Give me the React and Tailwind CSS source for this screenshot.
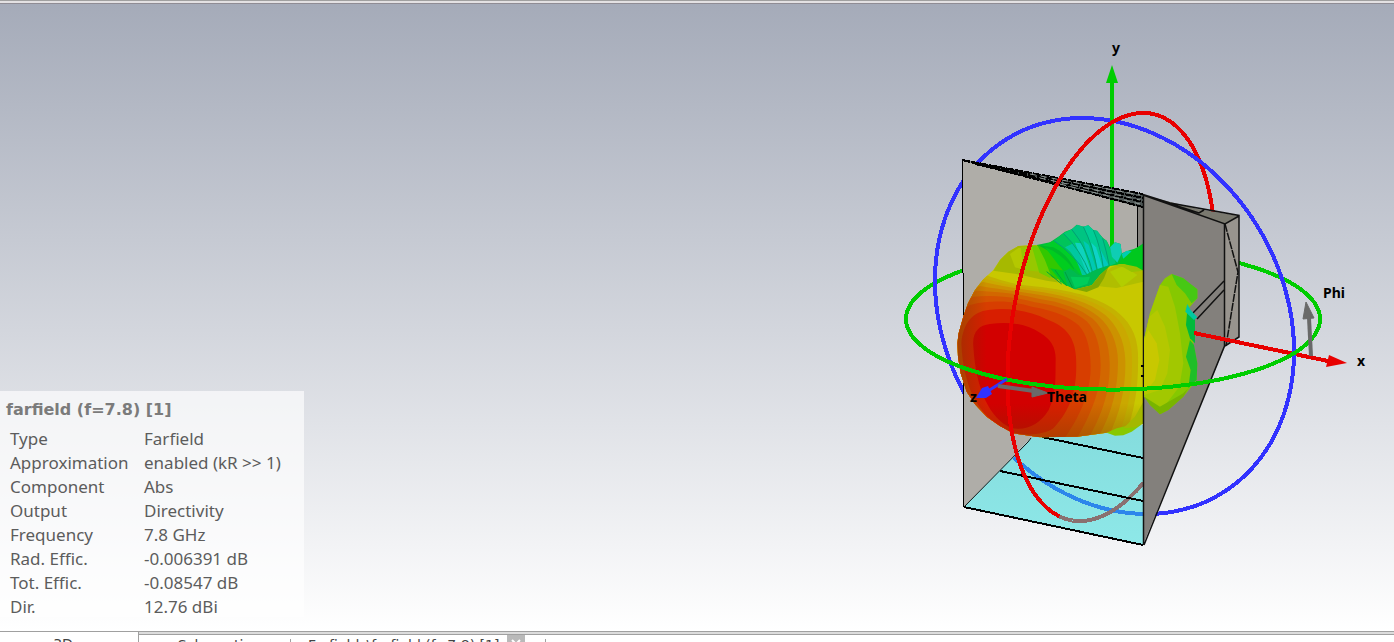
import React from "react";

const details = [
  ["Type", "Farfield"],
  ["Approximation", "enabled (kR >> 1)"],
  ["Component", "Abs"],
  ["Output", "Directivity"],
  ["Frequency", "7.8 GHz"],
  ["Rad. Effic.", "-0.006391 dB"],
  ["Tot. Effic.", "-0.08547 dB"],
  ["Dir.", "12.76 dBi"],
];

// projected circle: x = cx + a cos t, y = cy + s cos t + b sin t
const BLUE = { cx: 1114.5, cy: 316, a: 179.5, s: 35.3, b: 194.8 };
const RED = { cx: 1111.5, cy: 317, a: 104, s: -62.2, b: 194.3 };
const GREEN = { cx: 1113, cy: 319, a: 207, s: 0, b: 70.5 };

const Ring = ({ ring, from, to, color }) => {
  const points = [];
  for (let t = from; t <= to; t += 2) {
    const r = (t * Math.PI) / 180;
    const x = ring.cx + ring.a * Math.cos(r);
    const y = ring.cy + ring.s * Math.cos(r) + ring.b * Math.sin(r);
    points.push(`${x.toFixed(1)},${y.toFixed(1)}`);
  }
  return (
    <polyline
      points={points.join(" ")}
      fill="none"
      stroke={color}
      strokeWidth="4"
      shapeRendering="crispEdges"
    />
  );
};

// the lobes use a grid three times finer than the scene
const BODY =
  "M22 400 L26 370 L40 320 L54 280 L75 240 L100 208 L130 180 L150 150 L175 125 L205 108 L260 105 L300 120 L400 150 L500 162 L545 166 L580 180 V640 L540 650 L470 668 L380 680 L270 682 L190 670 L150 648 L110 620 L75 583 L50 545 L32 490 L24 440 Z";

const contours = [
  ["#c4b200", "M0 218 L110 196 C180 222 220 226 280 232 C380 246 440 262 495 300 C535 330 562 370 564 430 C566 520 558 600 520 690 L0 700 Z"],
  ["#caa800", "M0 230 L110 206 C180 228 220 232 280 239 C370 252 430 270 480 306 C518 334 544 380 546 440 C548 520 538 600 500 690 L0 700 Z"],
  ["#cc9200", "M0 242 L100 216 C170 232 220 238 280 247 C355 260 415 276 465 314 C500 344 524 390 526 450 C528 530 512 610 470 690 L0 700 Z"],
  ["#cf7c00", "M0 254 L90 228 C160 240 220 246 275 256 C345 266 405 286 448 322 C482 352 504 400 504 456 C504 530 488 610 440 690 L0 700 Z"],
  ["#d26700", "M0 268 L80 242 C150 246 210 252 265 266 C335 276 390 296 428 326 C462 356 478 400 479 460 C480 530 466 600 410 695 L0 700 Z"],
  ["#d55200", "M0 290 L70 260 C140 254 200 262 255 277 C325 288 376 304 410 334 C438 362 452 410 452 464 C452 530 434 596 375 695 L0 700 Z"],
  ["#d73e00", "M0 320 L60 285 C130 268 190 274 245 290 C315 302 360 322 386 346 C412 374 422 420 422 470 C422 530 404 600 340 690 L0 700 Z"],
  ["#d81e00", "M34 400 C40 335 70 306 115 300 C180 292 240 302 290 328 C350 350 374 384 378 440 C382 520 372 590 310 655 C280 676 220 680 170 662 C90 620 40 540 34 400 Z"],
  ["#d20000", "M70 410 C66 366 86 346 120 342 C180 334 230 342 270 368 C304 388 318 414 317 450 C316 500 320 550 296 600 C270 644 226 664 184 654 C120 626 78 540 70 410 Z"],
];

const Lobes = () => (
  <g transform="translate(950 210) scale(0.3333)">
    {/* back lobe, green to cyan */}
    <path
      d="M235 110 L300 97 L325 80 L345 65 L365 58 L380 44 L400 50 L415 46 L430 60 L440 62 L460 85 L470 92 L480 112 L495 97 L512 102 L515 130 L540 120 L560 115 L580 100 V190 L480 200 L400 250 L300 225 Z"
      fill="#00be3c"
    />
    <path d="M275 108 L312 92 Q370 130 412 196 L396 200 Q350 140 275 108 Z" fill="#00cd28" />
    <path d="M312 92 L340 70 Q392 120 420 192 L412 196 Q370 130 312 92 Z" fill="#00c45a" />
    <path d="M340 70 L365 58 Q412 115 428 188 L420 192 Q392 120 340 70 Z" fill="#00cc6e" />
    <path d="M365 58 L382 44 L400 50 Q430 110 442 182 L428 188 Q412 115 365 58 Z" fill="#00c482" />
    <path d="M400 50 L415 46 L430 60 Q452 110 460 174 L442 182 Q430 110 400 50 Z" fill="#00cd96" />
    <path d="M430 60 L442 62 L458 85 Q470 125 478 168 L460 174 Q452 110 430 60 Z" fill="#00c48c" />
    <path d="M458 85 L470 92 L484 125 L498 160 L478 168 Q470 125 458 85 Z" fill="#00c878" />
    {/* cyan core of the fan */}
    <path d="M345 112 Q375 130 396 195 L412 196 Q392 130 370 100 Z" fill="#00c8a0" />
    <path d="M375 98 L395 100 L425 188 L412 196 Z" fill="#0fd2be" />
    <path d="M400 92 L416 104 L440 182 L426 186 Z" fill="#00c8b4" />
    <path d="M424 98 L438 112 L458 172 L444 180 Z" fill="#0fd2c8" />
    <path d="M446 104 L456 128 L476 166 L460 172 Z" fill="#00c8be" />
    <path d="M480 112 L495 97 L512 102 L515 130 L502 158 L486 140 Z" fill="#0fcdb4" />
    <path d="M312 92 Q370 130 412 196 M340 70 Q392 120 420 192 M365 58 Q412 115 428 188 M400 50 Q430 110 442 182 M430 60 Q452 110 460 174 M458 85 Q470 125 478 168" stroke="#00a078" strokeWidth="3" fill="none" />
    <path d="M505 160 L530 130 L580 102 V184 Z" fill="#00c81e" />
    <path d="M515 132 L530 122 L545 124 L520 146 Z" fill="#00cdb0" />

    <clipPath id="body">
      <path d={BODY} />
    </clipPath>
    <path
      d="M22 400 L26 370 L40 320 L54 280 L75 240 L100 208 L130 180 L150 150 L175 125 L205 108 L260 105 L300 150 L330 215 L375 238 L425 226 L450 195 L480 168 L520 162 L580 182 V640 L540 650 L470 668 L380 680 L270 682 L190 670 L150 648 L110 620 L75 583 L50 545 L32 490 L24 440 Z"
      fill="#c8c800"
    />
    {/* folds between the main lobe and the back lobe */}
    <path d="M150 150 L175 125 L205 108 L260 105 L285 150 L330 218 L290 212 L210 194 L130 182 Z" fill="#a6b900" />
    <path d="M180 132 L205 114 L235 112 L225 180 L195 172 Z" fill="#b4c800" />
    <path d="M212 114 L252 108 L268 185 L222 180 Z" fill="#96c800" />
    <path d="M245 107 L275 108 L310 190 L300 204 L268 188 Z" fill="#6ecd00" />
    <path d="M262 105 L290 112 L345 190 L335 212 L305 202 L285 150 Z" fill="#32c800" />
    <path d="M265 106 L310 112 Q350 130 372 175 L360 196 L335 170 L300 125 Z" fill="#00b928" />
    <path d="M285 112 Q335 130 372 180 L352 190 L330 170 Z" fill="#00cd1e" />
    <path d="M300 175 L345 182 L365 200 L375 238 L340 222 Z" fill="#00c828" />
    <path d="M340 185 L360 175 L385 195 L405 195 L440 178 L480 165 L450 190 L425 224 L375 238 L352 225 Z" fill="#00b950" />
    <path d="M362 200 L400 202 L420 200 L412 222 L375 234 Z" fill="#00cd5a" />
    <path d="M290 185 L335 222 M315 180 L350 228 M345 186 L368 234" stroke="#00a03c" strokeWidth="3" fill="none" />
    <path d="M430 226 L455 195 L485 172 L510 162 L580 184 V215 L500 234 L460 230 Z" fill="#b0be00" />
    <path d="M480 185 L520 168 L562 195 L515 232 Z" fill="#b2cd00" />
    <path d="M490 166 L520 162 L560 170 L580 182 L545 186 L520 172 Z" fill="#96c300" />
    <path d="M375 238 L425 226 L450 195 L475 172 L462 205 L445 232 L410 246 Z" fill="#82a800" />

    <g clipPath="url(#body)">
      {contours.map(([fill, d]) => (
        <path key={fill} d={d} fill={fill} />
      ))}
      <rect x="20" y="185" width="90" height="520" fill="url(#edgeShade)" />
      <rect x="20" y="580" width="560" height="110" fill="url(#bottomShade)" />
    </g>
    <path d="M470 668 L500 655 L580 636 V640 L545 665 L520 676 L495 677 Z" fill="#88c800" />
    <path d="M580 575 V640 L555 652 L520 655 L555 620 Z" fill="#a4b800" />
  </g>
);

const SideLobe = () => (
  <g transform="translate(950 210) scale(0.3333)">
    <path
      d="M583 385 L600 310 L630 225 L645 205 L665 192 L700 205 L715 218 L742 238 L742 265 L712 300 L735 345 L730 400 L742 460 L740 510 L700 560 L655 600 L630 613 L600 585 L583 560 Z"
      fill="#86c800"
    />
    <path d="M665 192 L700 205 L742 238 L742 265 L725 280 L705 250 L680 225 Z" fill="#46c814" />
    <path d="M583 385 L600 310 L630 225 L655 230 L675 290 L690 370 L700 460 L688 530 L650 580 L615 598 L583 560 Z" fill="#a2c800" />
    <path d="M583 385 L598 320 L622 300 L645 350 L660 420 L652 490 L630 540 L583 555 Z" fill="#b4c800" />
    <path d="M583 390 L595 360 L620 400 L628 450 L615 510 L583 550 Z" fill="#c8c800" />
    <path d="M712 300 L735 325 L735 400 L720 385 L708 345 Z" fill="#00b93c" />
    <path d="M706 305 L712 282 L722 300 L742 322 L732 330 Z" fill="#00c8a0" />
    <path d="M720 390 L732 405 L742 460 L740 510 L715 535 L722 480 L708 440 Z" fill="#1ebe28" />
    <path d="M583 560 L630 590 L700 550 L715 535 L700 560 L655 600 L630 613 L600 585 Z" fill="#78b400" />
  </g>
);

const Scene = () => (
  <svg
    viewBox="890 30 490 530"
    className="w-[490px] h-[530px] shrink-0 font-['Noto_Sans','Open_Sans',sans-serif]"
    role="img"
    aria-label="Farfield directivity plot of a horn antenna"
  >
    <defs>
      <linearGradient id="edgeShade">
        <stop offset="0" stopColor="#5a4600" stopOpacity="0.4" />
        <stop offset="1" stopColor="#5a4600" stopOpacity="0" />
      </linearGradient>
      <linearGradient id="bottomShade" x2="0" y2="1">
        <stop offset="0" stopColor="#643c00" stopOpacity="0" />
        <stop offset="1" stopColor="#643c00" stopOpacity="0.35" />
      </linearGradient>
      <linearGradient id="floor" x2="0" y2="1">
        <stop offset="0" stopColor="#84dcdd" />
        <stop offset="1" stopColor="#8ee8e8" />
      </linearGradient>
    </defs>

    {/* parts of the rings behind the horn */}
    <Ring ring={GREEN} from={180} to={360} color="#00cd00" />
    <Ring ring={RED} from={-72} to={0} color="#e80000" />
    <Ring ring={BLUE} from={0} to={360} color="#3232ff" />

    {/* horn interior */}
    <polygon points="962,160 1143,206 1143,420 1031,438 964,507 964,273 962,273" fill="#afada8" />
    <polygon points="964,507 1031,438 1060,425 1143,425 1143,545" fill="url(#floor)" />
    <rect x="1138" y="206" width="5" height="60" fill="#85837e" />
    <Ring ring={BLUE} from={80} to={124} color="#2d86eb" />
    <Ring ring={RED} from={-288} to={-238} color="#8a7070" />
    <g stroke="#000" strokeWidth="2" fill="none" shapeRendering="crispEdges">
      <path d="M1042 437 L1143 458 M1000 471 L1143 501 M964 507 L1143 545" />
      <path d="M962.5 160 V273 M963.5 273 V507 M1137.5 207 V250" strokeWidth="1.5" />
    </g>
    <path d="M1031 438 L1028 442 L964 507" stroke="#111" fill="none" />

    {/* y axis */}
    <path d="M1112 80 V252" stroke="#00cd00" strokeWidth="4" />
    <polygon points="1112,65 1106,83 1118,83" fill="#00cd00" />

    {/* corrugated top plate */}
    <polygon points="962,160 1143,194 1143,208" fill="#4c5453" />
    <g stroke="#000" fill="none" strokeWidth="2" strokeDasharray="8 1" shapeRendering="crispEdges">
      <path d="M962 160 L1143 194" />
      <path d="M975 163 L1143 198" />
      <path d="M975 164 L1143 202" />
      <path d="M962 160 L1143 207" />
    </g>
    <path d="M1030 174 L1140 195 M1040 178 L1140 200 M1060 184 L1140 204" stroke="#929b98" strokeDasharray="6 5" fill="none" />

    <Lobes />

    {/* outer side wall */}
    <polygon points="1143,195 1198,209 1239,216 1225,224" fill="#7a796f" />
    <polygon points="1225,224 1239,216 1239,337 1225,346" fill="#98948e" />
    <polygon points="1143,195 1225,224 1225,346 1143,545" fill="#83807c" />
    <g stroke="#111" fill="none" strokeWidth="1.5">
      <path d="M1143.5 195 V545 M1224.5 224 V346 L1144 545" />
      <path d="M1143 194.5 L1170 203 L1239 215.5 V337 L1225 346 M1143 195 L1225 224 L1239 216 M1165 202 L1199 213 L1204 210" />
      <path d="M1225 224 L1238 272 L1226 346" strokeDasharray="8 1" />
      <path d="M1224 281 L1192 314 M1224 290 L1197 319" />
    </g>
    <path d="M1141 366 H1144 M1141 376 H1144" stroke="#000" strokeWidth="2" />

    <SideLobe />

    {/* x axis */}
    <path d="M1194 333 L1328 361" stroke="#e80000" strokeWidth="4" shapeRendering="crispEdges" />
    <polygon points="1329,355 1347,363 1326,367" fill="#e80000" />

    {/* parts of the rings in front */}
    <Ring ring={RED} from={-240} to={-72} color="#e80000" />
    <Ring ring={BLUE} from={-12} to={14} color="#3232ff" />
    <Ring ring={GREEN} from={0} to={180} color="#00cd00" />

    {/* z, theta and phi arrows */}
    <path d="M1007 379 L988 391" stroke="#3232ff" strokeWidth="3" />
    <polygon points="976,398 982,388 988,386 992,394 986,398" fill="#3232ff" />
    <g stroke="#696969" strokeWidth="4" fill="#696969">
      <path d="M998 386 L1034 391" />
      <path d="M1311 356 L1309 318" />
      <polygon points="1032,387 1048,393 1032,397" strokeWidth="1" />
      <polygon points="1306,302 1303,319 1314,318" strokeWidth="1" />
    </g>

    <g className="text-[14px] font-bold" fill="#000">
      <text x="1112" y="53">y</text>
      <text x="1357" y="366">x</text>
      <text x="970" y="402">z</text>
      <text x="1047" y="402">Theta</text>
      <text x="1323" y="298">Phi</text>
    </g>
  </svg>
);

const InfoPanel = () => (
  <section className="w-[304px] h-[226px] mb-[14px] shrink-0 self-end bg-white/65 pt-[7px] text-[#5c5c5c]">
    <h2 className="pl-[6px] font-['DejaVu_Sans',sans-serif] text-[16px] leading-6 font-bold text-[#7b7b7b]">
      farfield (f=7.8) [1]
    </h2>
    <table className="mt-[5px] ml-[10px] text-[17px] leading-6">
      <tbody>
        {details.map(([label, value]) => (
          <tr key={label}>
            <th scope="row" className="w-[134px] p-0 text-left font-normal">
              {label}
            </th>
            <td className="p-0 whitespace-nowrap">{value}</td>
          </tr>
        ))}
      </tbody>
    </table>
  </section>
);

const TabBar = () => (
  <nav className="flex h-[11px] shrink-0 items-start overflow-hidden border-t border-[#a0a0a0] bg-white font-['DejaVu_Sans',sans-serif] text-[14px] leading-5 text-[#444]">
    <button className="w-[138px] shrink-0 pt-[2px] pr-3">3D</button>
    <div className="flex-1 border-l border-[#a0a0a0] bg-[#dcdcdc] pt-[2px]">
      <div className="flex items-start border-t border-[#a0a0a0] bg-white">
        <button className="w-[151px] shrink-0">Schematic</button>
        <span className="mt-1 h-4 w-px bg-[#a0a0a0]" />
        <button className="ml-[17px] shrink-0 whitespace-nowrap">
          Farfields\farfield (f=7.8) [1]
        </button>
        <button aria-label="Close tab" className="ml-2 flex h-[18px] w-[18px] shrink-0 justify-center bg-[#b9b9b9] pt-1">
          <svg viewBox="0 0 10 10" className="h-[10px] w-[10px]" stroke="#fff" strokeWidth="2">
            <path d="M1 1 L9 9 M9 1 L1 9" />
          </svg>
        </button>
        <span className="mt-1 ml-5 h-4 w-px bg-[#a0a0a0]" />
      </div>
    </div>
  </nav>
);

export default function App() {
  return (
    <div className="flex h-screen flex-col overflow-hidden font-['Noto_Sans','Open_Sans',sans-serif]">
      <header className="h-1 shrink-0 border-t border-b border-t-[#a0a0a0] border-b-[#8f8c94] bg-[#e3e1e3]" />
      <main className="flex min-h-0 flex-1 items-start justify-between bg-linear-to-b from-[#a5abb9] to-white pr-[14px]">
        <InfoPanel />
        <div className="pt-[26px]">
          <Scene />
        </div>
      </main>
      <TabBar />
    </div>
  );
}
